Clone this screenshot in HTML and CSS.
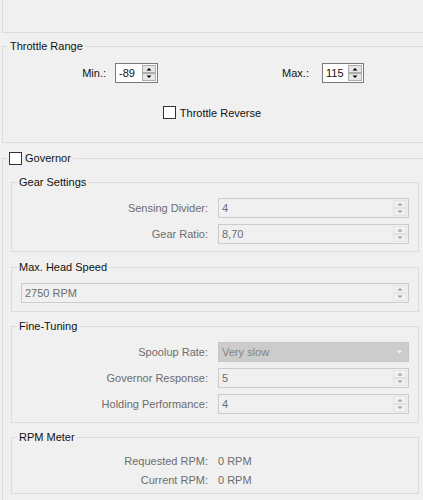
FILE: index.html
```html
<!DOCTYPE html>
<html>
<head>
<meta charset="utf-8">
<link rel="stylesheet" href="styles.css">
</head>
<body>
<div class="top-panel"></div>

<fieldset class="group throttle">
  <legend class="group-title">Throttle Range</legend>
  <div class="range-row">
    <span class="range-label min-label">Min.:</span>
    <div class="spin spin-min">
      <span>-89</span>
      <svg class="spin-btns" width="14" height="16" viewBox="0 0 14 16"><rect x="0.5" y="0.5" width="13" height="7" fill="#e6e6e6" stroke="#adadad"/><rect x="0.5" y="8.5" width="13" height="7" fill="#e6e6e6" stroke="#adadad"/><path d="M4.5 5.5 L7 3 L9.5 5.5 Z" fill="#000"/><path d="M4.5 10.5 L9.5 10.5 L7 13 Z" fill="#000"/></svg>
    </div>
    <span class="range-label max-label">Max.:</span>
    <div class="spin spin-max">
      <span>115</span>
      <svg class="spin-btns" width="14" height="16" viewBox="0 0 14 16"><rect x="0.5" y="0.5" width="13" height="7" fill="#e6e6e6" stroke="#adadad"/><rect x="0.5" y="8.5" width="13" height="7" fill="#e6e6e6" stroke="#adadad"/><path d="M4.5 5.5 L7 3 L9.5 5.5 Z" fill="#000"/><path d="M4.5 10.5 L9.5 10.5 L7 13 Z" fill="#000"/></svg>
    </div>
  </div>
  <div class="reverse-row">
    <span class="check"></span>
    <span>Throttle Reverse</span>
  </div>
</fieldset>

<fieldset class="group governor">
  <legend class="gov-title"><span class="check"></span><span>Governor</span></legend>

  <fieldset class="sub gear">
    <legend class="group-title">Gear Settings</legend>
    <div class="field-row">
      <span class="field-label">Sensing Divider:</span>
      <div class="field">
        <span>4</span>
        <svg class="spin-btns" width="14" height="16" viewBox="0 0 14 16"><rect x="0.5" y="0.5" width="13" height="7" fill="#f0f0f0" stroke="#d9d9d9" stroke-dasharray="1 1"/><rect x="0.5" y="8.5" width="13" height="7" fill="#f0f0f0" stroke="#d9d9d9" stroke-dasharray="1 1"/><path d="M4.5 5.5 L7 3 L9.5 5.5 Z" fill="#9a9a9a"/><path d="M4.5 10.5 L9.5 10.5 L7 13 Z" fill="#9a9a9a"/></svg>
      </div>
    </div>
    <div class="field-row">
      <span class="field-label">Gear Ratio:</span>
      <div class="field">
        <span>8,70</span>
        <svg class="spin-btns" width="14" height="16" viewBox="0 0 14 16"><rect x="0.5" y="0.5" width="13" height="7" fill="#f0f0f0" stroke="#d9d9d9" stroke-dasharray="1 1"/><rect x="0.5" y="8.5" width="13" height="7" fill="#f0f0f0" stroke="#d9d9d9" stroke-dasharray="1 1"/><path d="M4.5 5.5 L7 3 L9.5 5.5 Z" fill="#9a9a9a"/><path d="M4.5 10.5 L9.5 10.5 L7 13 Z" fill="#9a9a9a"/></svg>
      </div>
    </div>
  </fieldset>

  <fieldset class="sub head">
    <legend class="group-title">Max. Head Speed</legend>
    <div class="field field-wide">
      <span>2750 RPM</span>
      <svg class="spin-btns" width="14" height="16" viewBox="0 0 14 16"><rect x="0.5" y="0.5" width="13" height="7" fill="#f0f0f0" stroke="#d9d9d9" stroke-dasharray="1 1"/><rect x="0.5" y="8.5" width="13" height="7" fill="#f0f0f0" stroke="#d9d9d9" stroke-dasharray="1 1"/><path d="M4.5 5.5 L7 3 L9.5 5.5 Z" fill="#9a9a9a"/><path d="M4.5 10.5 L9.5 10.5 L7 13 Z" fill="#9a9a9a"/></svg>
    </div>
  </fieldset>

  <fieldset class="sub tuning">
    <legend class="group-title">Fine-Tuning</legend>
    <div class="field-row">
      <span class="field-label">Spoolup Rate:</span>
      <div class="combo">
        <span>Very slow</span>
        <svg class="combo-arrow" width="9" height="6" viewBox="0 0 9 6"><path d="M1 1 L8 1 L4.5 5 Z" fill="#f6f6f6" stroke="#bdbdbd" stroke-width="0.6"/></svg>
      </div>
    </div>
    <div class="field-row">
      <span class="field-label">Governor Response:</span>
      <div class="field">
        <span>5</span>
        <svg class="spin-btns" width="14" height="16" viewBox="0 0 14 16"><rect x="0.5" y="0.5" width="13" height="7" fill="#f0f0f0" stroke="#d9d9d9" stroke-dasharray="1 1"/><rect x="0.5" y="8.5" width="13" height="7" fill="#f0f0f0" stroke="#d9d9d9" stroke-dasharray="1 1"/><path d="M4.5 5.5 L7 3 L9.5 5.5 Z" fill="#9a9a9a"/><path d="M4.5 10.5 L9.5 10.5 L7 13 Z" fill="#9a9a9a"/></svg>
      </div>
    </div>
    <div class="field-row">
      <span class="field-label">Holding Performance:</span>
      <div class="field">
        <span>4</span>
        <svg class="spin-btns" width="14" height="16" viewBox="0 0 14 16"><rect x="0.5" y="0.5" width="13" height="7" fill="#f0f0f0" stroke="#d9d9d9" stroke-dasharray="1 1"/><rect x="0.5" y="8.5" width="13" height="7" fill="#f0f0f0" stroke="#d9d9d9" stroke-dasharray="1 1"/><path d="M4.5 5.5 L7 3 L9.5 5.5 Z" fill="#9a9a9a"/><path d="M4.5 10.5 L9.5 10.5 L7 13 Z" fill="#9a9a9a"/></svg>
      </div>
    </div>
  </fieldset>

  <fieldset class="sub rpm">
    <legend class="group-title">RPM Meter</legend>
    <div class="info-row">
      <span class="field-label">Requested RPM:</span>
      <span class="info-value">0 RPM</span>
    </div>
    <div class="info-row">
      <span class="field-label">Current RPM:</span>
      <span class="info-value">0 RPM</span>
    </div>
  </fieldset>
</fieldset>
</body>
</html>
```

FILE: styles.css
```css
html, body {
  margin: 0;
  padding: 0;
}

body {
  width: 423px;
  height: 500px;
  overflow: hidden;
  background: #f0f0f0;
  font-family: "Liberation Sans", Arial, sans-serif;
  font-size: 11px;
  line-height: 14px;
  color: #111;
}

.top-panel {
  height: 32px;
  margin-left: 2px;
  border-left: 1px solid #dcdcdc;
  border-bottom: 1px solid #dcdcdc;
}

fieldset {
  min-width: 0;
  margin: 0;
  border: 1px solid #dcdcdc;
}

legend {
  line-height: 14px;
}

.group {
  margin-left: 2px;
  border-right: none;
}

.group-title {
  padding: 0 2px;
}

/* Throttle Range */
.throttle {
  margin-top: 6px;
  padding: 10px 0 22px 5px;
}

.range-row {
  display: flex;
  align-items: center;
}

.range-label {
  text-align: right;
}

.min-label {
  width: 98px;
  margin-right: 9px;
}

.max-label {
  width: 151px;
  margin-right: 13px;
}

.spin {
  box-sizing: border-box;
  height: 20px;
  display: flex;
  align-items: center;
  justify-content: space-between;
  padding: 0 1px 0 3px;
  background: #fff;
  border: 1px solid #7a7a7a;
}

.spin-min {
  width: 43px;
}

.spin-max {
  width: 42px;
}

.spin-btns {
  display: block;
  flex: none;
}

.reverse-row {
  height: 15px;
  margin-top: 22px;
  display: flex;
  align-items: center;
  justify-content: center;
  gap: 4px;
  padding-right: 7px;
}

.check {
  box-sizing: border-box;
  width: 13px;
  height: 13px;
  background: #fff;
  border: 1px solid #333;
  flex: none;
}

/* Governor */
.governor {
  margin-top: 8px;
  padding: 10px 0 10px 5px;
}

.gov-title {
  display: flex;
  align-items: center;
  gap: 3px;
  padding: 0 2px 0 1px;
}

.sub {
  margin: 0 4px 0 3px;
  padding: 9px 9px 7px 5px;
}

.head {
  margin-top: 8px;
  padding-bottom: 8px;
}

.tuning {
  margin-top: 7px;
  padding-bottom: 8px;
}

.rpm {
  margin-top: 7px;
  padding-top: 7px;
  padding-bottom: 4px;
}

.field-row {
  display: flex;
  align-items: center;
  gap: 10px;
}

.field-row + .field-row {
  margin-top: 6px;
}

.field-label {
  width: 191px;
  flex: none;
  text-align: right;
  color: #6d6d6d;
}

.field {
  box-sizing: border-box;
  flex: 1;
  height: 20px;
  display: flex;
  align-items: center;
  justify-content: space-between;
  padding: 0 1px 0 3px;
  border: 1px solid #cccccc;
  background: #f0f0f0;
  color: #6d6d6d;
}

.field-wide {
  margin-left: 4px;
}

.combo {
  box-sizing: border-box;
  flex: 1;
  height: 20px;
  display: flex;
  align-items: center;
  justify-content: space-between;
  padding: 0 4px 0 3px;
  border: 1px solid #c4c4c4;
  background: #cccccc;
  color: #838383;
}

.combo-arrow {
  display: block;
}

.info-row {
  display: flex;
  align-items: center;
  gap: 10px;
  height: 19px;
}

.info-value {
  color: #6d6d6d;
}
```
